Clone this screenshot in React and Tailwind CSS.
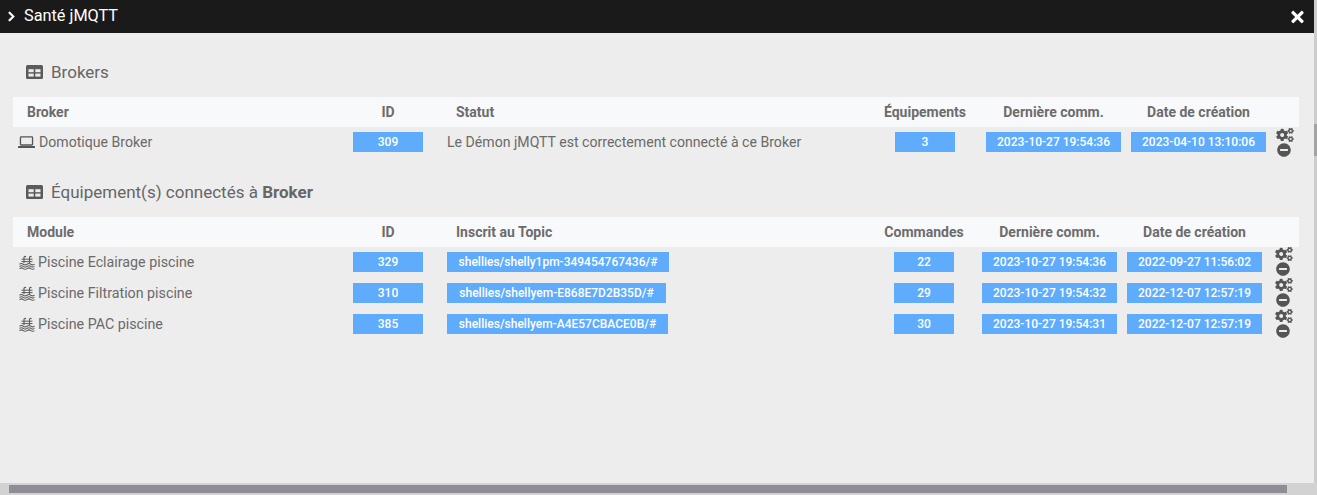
import React from "react";
import { FaCogs, FaMinusCircle, FaChevronRight, FaTimes } from "react-icons/fa";

const Laptop = () => (
  <svg viewBox="0 0 18 14" className="w-[17px] h-[14px] shrink-0" fill="none" stroke="#555">
    <rect x="2.6" y="1.6" width="12.8" height="8.6" rx="0.8" strokeWidth="1.4" />
    <path d="M0.8 12.3h16.4" strokeWidth="2.2" strokeLinecap="round" />
  </svg>
);

const TableIcon = () => (
  <svg viewBox="0 0 17 14" className="w-[17px] h-[14px] mr-[8px] shrink-0">
    <rect width="17" height="14" rx="1.5" fill="#5a5a5a" />
    <rect x="2.5" y="4.2" width="5.2" height="3" fill="#ededed" />
    <rect x="9.3" y="4.2" width="5.2" height="3" fill="#ededed" />
    <rect x="2.5" y="8.6" width="5.2" height="3" fill="#ededed" />
    <rect x="9.3" y="8.6" width="5.2" height="3" fill="#ededed" />
  </svg>
);

const PoolIcon = () => (
  <svg viewBox="0 0 16 15" className="w-[16px] h-[15px] shrink-0" fill="none" stroke="#5a5a5a" strokeWidth="1.1">
    <path d="M5 8V2.6C5 1.4 6.2 1 7 1.8M10.5 8V2.6C10.5 1.4 11.7 1 12.5 1.8" />
    <path d="M2.5 4.2h11M2.5 6.6h11" strokeWidth="1" />
    <path d="M0.5 9.2q1.9-1.4 3.7 0t3.8 0 3.8 0 3.7 0" />
    <path d="M0.5 11.4q1.9-1.4 3.7 0t3.8 0 3.8 0 3.7 0" />
    <path d="M0.5 13.6q1.9-1.4 3.7 0t3.8 0 3.8 0 3.7 0" />
  </svg>
);

const Badge = ({ children, className = "" }) => (
  <span className={"h-5 flex items-center justify-center bg-[#60acfc] text-white text-[12px] font-medium " + className}>{children}</span>
);

const Actions = ({ cls }) => (
  <div className={"flex flex-col items-start " + cls}>
    <FaCogs className="w-[18px] h-[14px] text-[#555]" />
    <FaMinusCircle className="w-[14px] h-[14px] text-[#555] ml-[1px] mt-[1px]" />
  </div>
);

const Head = ({ className = "", children }) => (
  <div className={"font-bold text-[14px] text-[#6c6c6c] " + className}>{children}</div>
);

const Title = ({ children, className }) => (
  <div className={"flex items-center pl-[13px] text-[17px] text-[#666] " + className}>
    <TableIcon />
    <span className="pt-[1px]">{children}</span>
  </div>
);

const t2 = [
  ["Piscine Eclairage piscine", "329", "shellies/shelly1pm-349454767436/#", "22", "2023-10-27 19:54:36", "2022-09-27 11:56:02", "w-[222px]"],
  ["Piscine Filtration piscine", "310", "shellies/shellyem-E868E7D2B35D/#", "29", "2023-10-27 19:54:32", "2022-12-07 12:57:19", "w-[219px]"],
  ["Piscine PAC piscine", "385", "shellies/shellyem-A4E57CBACE0B/#", "30", "2023-10-27 19:54:31", "2022-12-07 12:57:19", "w-[221px]"],
];

export default function App() {
  return (
    <div className="w-[1317px] h-[495px] overflow-hidden flex flex-col bg-[#ededed] font-['Roboto',sans-serif]">
      <div className="flex flex-1 min-h-0">
        <div className="flex-1 min-w-0">
          <div className="h-[33px] bg-[#1a1a1a] flex items-center text-white pl-[7px] pr-[10px]">
            <FaChevronRight className="w-[9px] h-[11px] mr-[8px] stroke-current stroke-[30]" />
            <span className="text-[16.3px] flex-1">Santé jMQTT</span>
            <FaTimes className="w-[13px] h-[18px]" />
          </div>

          <div className="px-[13px]">
            <Title className="h-[64px] pt-[14px]">Brokers</Title>
            <div className="w-[1286px]">
              <div className="grid grid-cols-[335px_94px_437px_102px_145px_145px_28px] h-[30px] items-center bg-[#f8f9fb]">
                <Head className="pl-[14px]">Broker</Head>
                <Head className="w-[80px] text-center">ID</Head>
                <Head className="pl-[14px]">Statut</Head>
                <Head className="w-[92px] text-center">Équipements</Head>
                <Head className="text-center">Dernière comm.</Head>
                <Head className="text-center">Date de création</Head>
                <div />
              </div>
              <div className="grid grid-cols-[335px_94px_437px_102px_145px_145px_28px] h-[31px] pt-[5px] text-[14.1px] text-[#6a6a6a]">
                <div className="flex items-center h-5 pl-[5px] gap-[4px]"><Laptop /><span className="pt-[1px]">Domotique Broker</span></div>
                <Badge className="w-[70px] ml-[5px]">309</Badge>
                <div className="flex items-center h-5 pl-[5px] pt-[1px]">Le Démon jMQTT est correctement connecté à ce Broker</div>
                <Badge className="w-[60px] ml-[16px]">3</Badge>
                <Badge className="mx-[5px]">2023-10-27 19:54:36</Badge>
                <Badge className="mx-[5px]">2023-04-10 13:10:06</Badge>
                <Actions cls="pl-[5px] -mt-[4px]" />
              </div>
            </div>

            <Title className="h-[59px] pt-[9px]"><>Équipement(s) connectés à <b className="font-bold">Broker</b></></Title>
            <div className="w-[1286px]">
              <div className="grid grid-cols-[335px_94px_437px_98px_145px_145px_32px] h-[30px] items-center bg-[#f8f9fb]">
                <Head className="pl-[14px]">Module</Head>
                <Head className="w-[80px] text-center">ID</Head>
                <Head className="pl-[14px]">Inscrit au Topic</Head>
                <Head className="w-[90px] text-center">Commandes</Head>
                <Head className="text-center">Dernière comm.</Head>
                <Head className="text-center">Date de création</Head>
                <div />
              </div>
              {t2.map((r) => (
                <div key={r[1]} className="grid grid-cols-[335px_94px_437px_98px_145px_145px_32px] h-[31px] pt-[5px] text-[14.25px] text-[#6a6a6a]">
                  <div className="flex items-center h-5 pl-[6px] gap-[3px]">
                    <PoolIcon />
                    <span className="pt-[2px]">{r[0]}</span>
                  </div>
                  <Badge className="w-[70px] ml-[5px]">{r[1]}</Badge>
                  <Badge className={"ml-[5px] " + r[6]}>{r[2]}</Badge>
                  <Badge className="w-[60px] ml-[15px]">{r[3]}</Badge>
                  <Badge className="mx-[5px]">{r[4]}</Badge>
                  <Badge className="mx-[5px]">{r[5]}</Badge>
                  <Actions cls="pl-[8px] -mt-[5px]" />
                </div>
              ))}
            </div>
          </div>
        </div>
        <div className="w-[3px] bg-[#cdcdcd]">
          <div className="mt-[124px] h-[32px] bg-[#a3a3a3]" />
        </div>
      </div>
      <div className="h-[12px] bg-[#d2d2d2] flex items-center pl-[9px]">
        <div className="w-[1278px] h-[8px] bg-[#8f8d93]" />
      </div>
    </div>
  );
}
